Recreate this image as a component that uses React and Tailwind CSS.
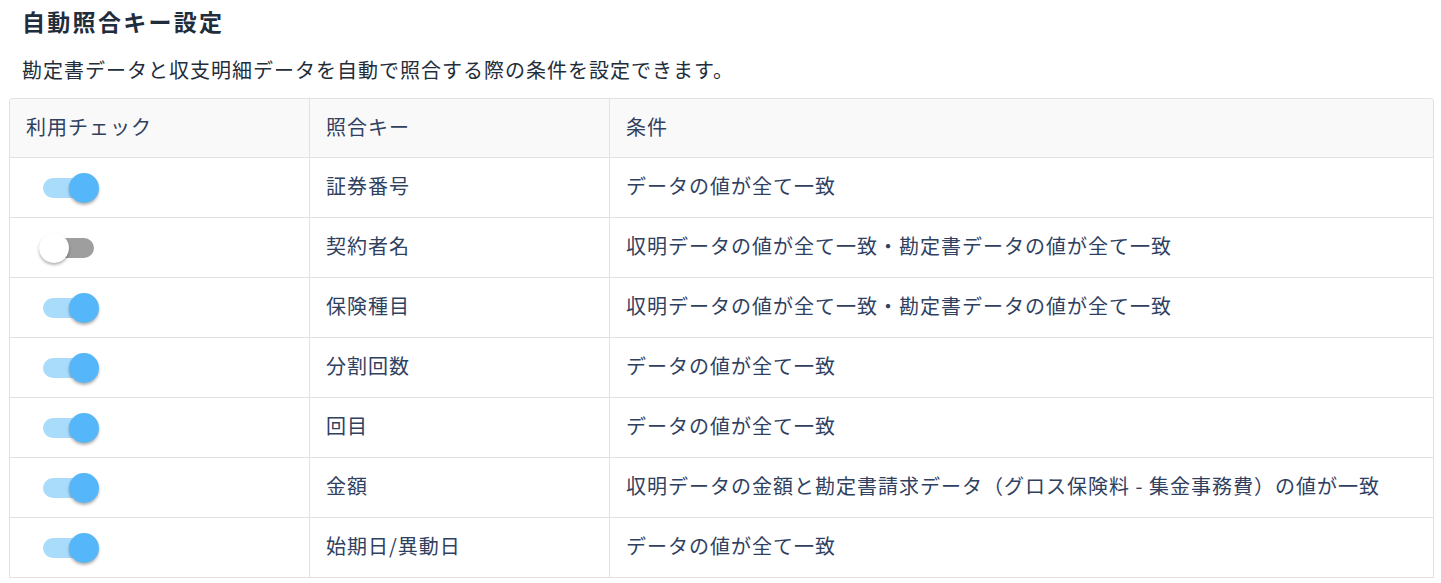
import React, { useState } from 'react';

const ROWS = [
  { key: '証券番号', cond: 'データの値が全て一致', on: true },
  { key: '契約者名', cond: '収明データの値が全て一致・勘定書データの値が全て一致', on: false },
  { key: '保険種目', cond: '収明データの値が全て一致・勘定書データの値が全て一致', on: true },
  { key: '分割回数', cond: 'データの値が全て一致', on: true },
  { key: '回目', cond: 'データの値が全て一致', on: true },
  { key: '金額', cond: '収明データの金額と勘定書請求データ（グロス保険料 - 集金事務費）の値が一致', on: true },
  { key: '始期日/異動日', cond: 'データの値が全て一致', on: true },
];

const Toggle = ({ on, onClick }) => (
  <button type="button" onClick={onClick} className="relative h-[30px] w-[60px] cursor-pointer">
    <span
      className={`absolute left-[4px] top-[5px] h-[20px] w-[51px] rounded-full ${on ? 'bg-[#a9dbfb]' : 'bg-[#9e9e9e]'}`}
    />
    <span
      className={`absolute top-0 h-[30px] w-[30px] rounded-full shadow-[0_2px_3px_rgba(0,0,0,0.3)] ${on ? 'left-[30px] bg-[#55b6f9]' : 'left-0 bg-white'}`}
    />
  </button>
);

export default function App() {
  const [rows, setRows] = useState(ROWS);
  const flip = (i) => setRows((r) => r.map((x, j) => (j === i ? { ...x, on: !x.on } : x)));

  return (
    <div className="min-h-[583px] bg-white pl-[9px] pr-[7px] text-[#30415f] font-['Noto_Sans_CJK_JP','Noto_Sans',sans-serif]">
      <div className="flex h-[44px] items-center pb-[2px] pl-[13px] text-[23px] font-bold tracking-[2.3px] text-[#1f2d3d]">
        自動照合キー設定
      </div>
      <div className="flex h-[54px] items-center pb-[2px] pl-[13px] text-[20px] tracking-[1px] text-[#232d3a]">
        勘定書データと収支明細データを自動で照合する際の条件を設定できます。
      </div>
      <div className="overflow-hidden rounded-t-[4px] border-x border-t border-[#e2e2e2] text-[20px] tracking-[1px]">
        <div className="grid h-[59px] grid-cols-[299px_300px_1fr] border-b border-[#e2e2e2] bg-[#f9f9f9]">
          <div className="flex items-center px-4 pb-[3px]">利用チェック</div>
          <div className="flex items-center border-l border-[#e2e2e2] px-4 pb-[3px]">照合キー</div>
          <div className="flex items-center border-l border-[#e2e2e2] px-4 pb-[3px]">条件</div>
        </div>
        {rows.map((r, i) => (
          <div key={r.key} className="grid h-[60px] grid-cols-[299px_300px_1fr] border-b border-[#e2e2e2]">
            <div className="flex items-center pl-[29px]">
              <Toggle on={r.on} onClick={() => flip(i)} />
            </div>
            <div className="flex items-center border-l border-[#e2e2e2] px-4 pb-[3px]">{r.key}</div>
            <div className="flex items-center border-l border-[#e2e2e2] px-4 pb-[3px]">{r.cond}</div>
          </div>
        ))}
      </div>
    </div>
  );
}
